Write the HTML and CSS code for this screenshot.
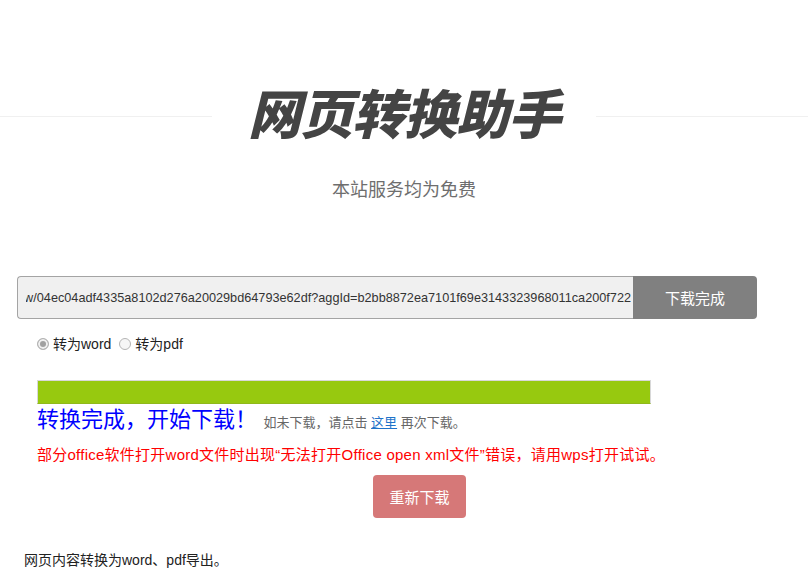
FILE: index.html
```html
<!DOCTYPE html>
<html lang="zh-CN">
<head>
    <meta charset="UTF-8">
    <meta name="viewport" content="width=device-width, initial-scale=1.0">
    <title>网页转换助手</title>
    <link rel="stylesheet" href="styles.css">
</head>
<body>
    <div class="banner">
        <div class="banner-line"></div>
        <h1 class="banner-title">网页转换助手</h1>
        <div class="banner-line"></div>
    </div>
    <p class="subtitle">本站服务均为免费</p>

    <div class="convert-box">
        <div class="url-field">
            <div class="url-text"><span>https://www.toutiao.com/preview/04ec04adf4335a8102d276a20029bd64793e62df?aggId=b2bb8872ea7101f69e3143323968011ca200f722</span></div>
        </div>
        <button class="btn-done">下载完成</button>
    </div>

    <div class="options">
        <label class="option"><span class="radio checked"></span>转为word</label>
        <label class="option"><span class="radio"></span>转为pdf</label>
    </div>

    <div class="result">
        <div class="progress-bar">
            <div class="progress" style="width: 100%"></div>
        </div>
        <div class="status">
            <span class="status-main">转换完成，开始下载！</span>
            <span class="status-tip">如未下载，请点击 <a href="#" class="again">这里</a> 再次下载。</span>
        </div>
        <p class="warning">部分office软件打开word文件时出现“无法打开Office open xml文件”错误，请用wps打开试试。</p>
        <div class="actions">
            <button class="btn-retry">重新下载</button>
        </div>
    </div>

    <footer class="intro">
        <p>网页内容转换为word、pdf导出。</p>
    </footer>
</body>
</html>
```

FILE: styles.css
```css
body {
    margin: 0;
    padding: 0;
    background-color: #fff;
    color: #222;
    font-family: "Liberation Sans", "Noto Sans CJK SC", sans-serif;
}

.banner {
    display: flex;
    align-items: flex-start;
    padding-top: 81px;
}

.banner-line {
    flex: 1;
    height: 1px;
    margin-top: 35px;
    background-color: #f0f0f0;
}

.banner-title {
    margin: 0;
    padding: 0 36px;
    height: 60px;
    line-height: 60px;
    font-family: "Noto Sans CJK SC", sans-serif;
    font-size: 53px;
    font-weight: 900;
    font-style: italic;
    letter-spacing: -1px;
    color: #444;
}

.subtitle {
    margin: 37px 0 0;
    text-align: center;
    font-size: 18px;
    line-height: 24px;
    color: #6e6e6e;
}

.convert-box {
    display: flex;
    height: 43px;
    margin: 74px 51px 0 17px;
}

.url-field {
    flex: 1;
    display: flex;
    align-items: center;
    padding: 0 2px 0 8px;
    background-color: #f0f0f0;
    border: 1px solid #a4a4a4;
    border-right: none;
    border-radius: 4px 0 0 4px;
    min-width: 0;
}

.url-text {
    display: flex;
    justify-content: flex-end;
    overflow: hidden;
    white-space: nowrap;
    width: 100%;
    font-size: 12.7px;
    color: #333;
}

.url-text span {
    flex-shrink: 0;
}

.btn-done {
    width: 124px;
    border: none;
    border-radius: 0 4px 4px 0;
    background-color: #808080;
    color: #fff;
    font-family: inherit;
    font-size: 15px;
    cursor: pointer;
}

.options {
    display: flex;
    gap: 8px;
    margin: 15px 0 0 37px;
    font-size: 14px;
    line-height: 20px;
    color: #222;
}

.option {
    display: flex;
    align-items: center;
    gap: 4px;
}

.radio {
    box-sizing: border-box;
    width: 12px;
    height: 12px;
    border: 1px solid #b4b4b4;
    border-radius: 50%;
    background-color: #f6f6f6;
}

.radio.checked {
    background-color: #a0a0a0;
    box-shadow: inset 0 0 0 2px #f0f0f0;
}

.result {
    margin: 26px 6px 0 37px;
}

.progress-bar {
    box-sizing: border-box;
    width: 614px;
    height: 24px;
    border: 1px solid #d8d8d8;
    border-bottom-color: #8fb81a;
    background-color: #f5f5f5;
}

.progress {
    height: 100%;
    background-color: #97c90f;
}

.status {
    margin-top: 1px;
    line-height: 30px;
}

.status-main {
    font-size: 22px;
    color: #0000ff;
    margin-right: 2px;
}

.status-tip {
    font-size: 13px;
    color: #666;
}

.again {
    color: #1f73c9;
}

.warning {
    margin: 7px 0 0;
    font-size: 15px;
    line-height: 20px;
    letter-spacing: 0.25px;
    color: #ff0000;
}

.actions {
    margin-top: 10px;
    text-align: center;
}

.btn-retry {
    width: 93px;
    height: 43px;
    border: none;
    border-radius: 4px;
    background-color: #d67878;
    color: #fff;
    font-family: inherit;
    font-size: 15px;
    cursor: pointer;
}

.intro {
    margin: 32px 0 0 24px;
}

.intro p {
    margin: 0;
    font-size: 14px;
    line-height: 20px;
    color: #222;
}
```
